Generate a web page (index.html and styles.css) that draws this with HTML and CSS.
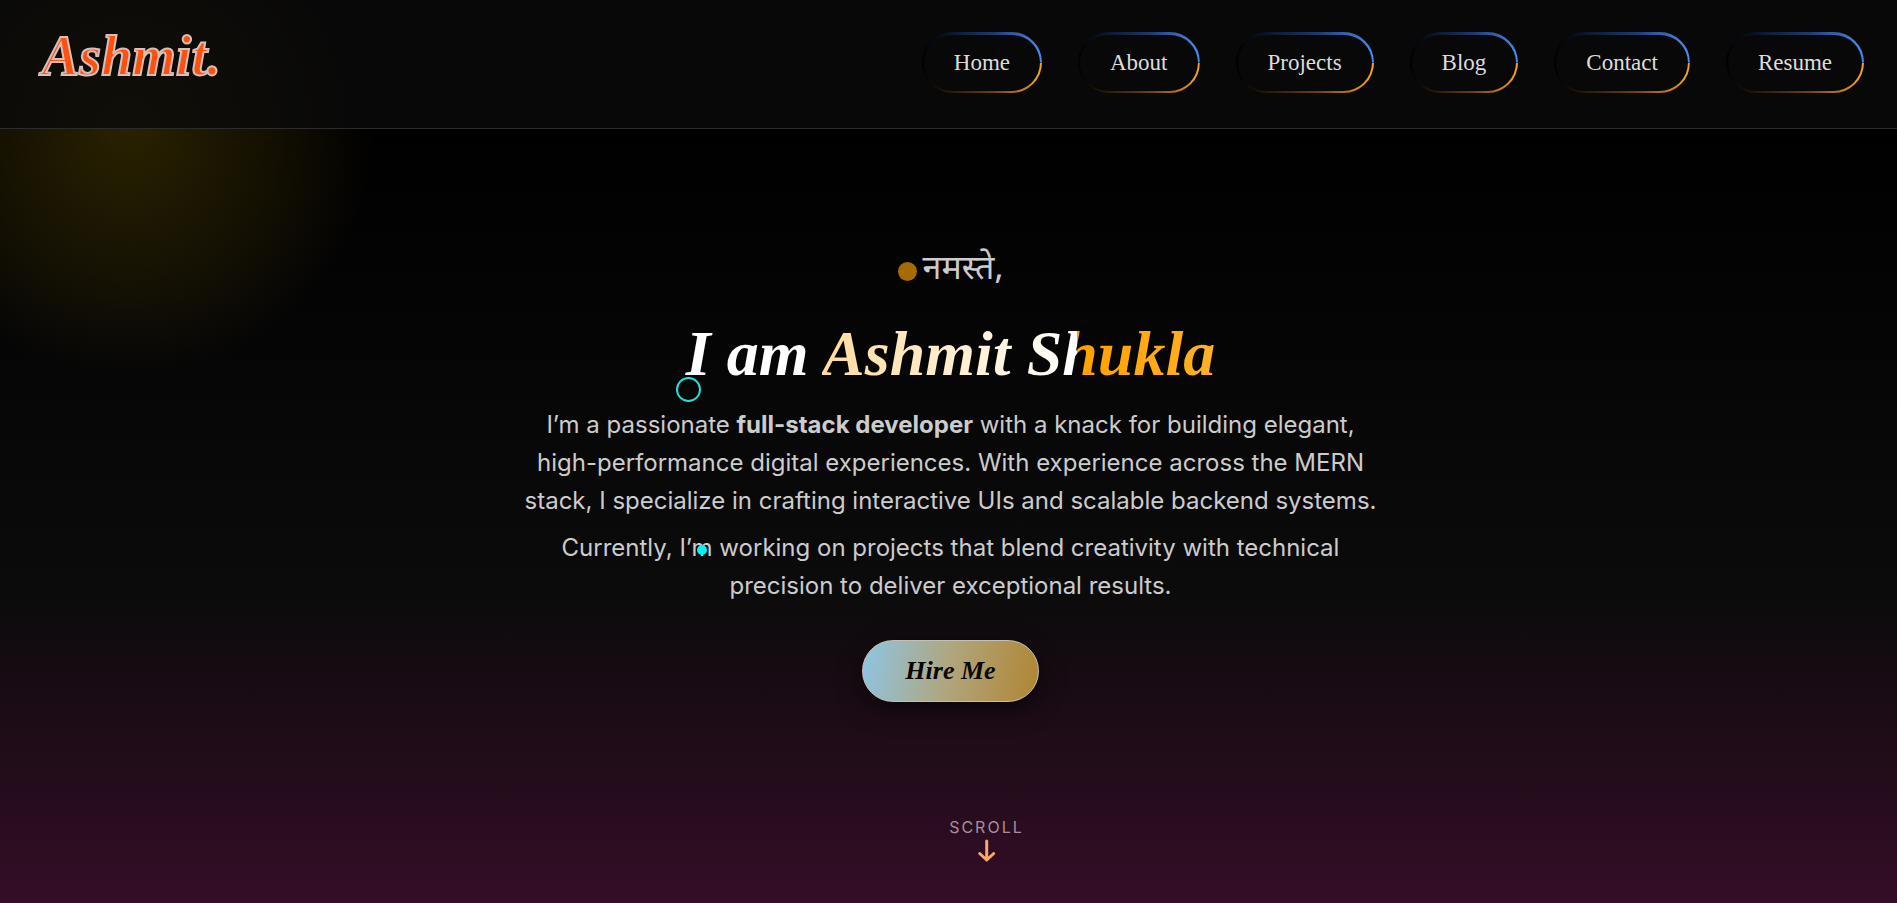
FILE: index.html
```html
<!DOCTYPE html>
<html lang="en">
<head>
<meta charset="utf-8">
<meta name="viewport" content="width=device-width, initial-scale=1">
<title>Ashmit Shukla</title>
<link rel="stylesheet" href="styles.css">
</head>
<body>
<div class="glow" aria-hidden="true"></div>
<header class="site-header">
  <a class="logo" href="#home">Ashmit.</a>
  <nav class="nav" aria-label="Main">
    <a class="nav-link" href="#home">Home</a>
    <a class="nav-link" href="#about">About</a>
    <a class="nav-link" href="#projects">Projects</a>
    <a class="nav-link" href="#blog">Blog</a>
    <a class="nav-link" href="#contact">Contact</a>
    <a class="nav-link" href="#resume">Resume</a>
  </nav>
</header>
<main class="hero" id="home">
  <p class="greeting"><span class="greeting-dot"></span><span lang="hi">नमस्ते,</span></p>
  <h1 class="title">I am <span class="name">Ashmit Shukla</span></h1>
  <div class="intro">
    <p>I’m a passionate <strong>full-stack developer</strong> with a knack for building elegant, high-performance digital experiences. With experience across the MERN stack, I specialize in crafting interactive UIs and scalable backend systems.</p>
    <p>Currently, I’m working on projects that blend creativity with technical precision to deliver exceptional results.</p>
  </div>
  <button class="hire" type="button">Hire Me</button>
</main>
<a class="scroll" href="#about">
  <span class="scroll-label">SCROLL</span>
  <svg class="scroll-arrow" viewBox="0 0 18 24" aria-hidden="true"><path d="M9 2v19M2 14.500l7 6.500 7-6.500"/></svg>
</a>
<div class="cursor-ring" aria-hidden="true"></div>
<div class="cursor-dot" aria-hidden="true"></div>
</body>
</html>
```
FILE: styles.css
```css
* { box-sizing: border-box; }

body {
  margin: 0;
  min-height: 100vh;
  position: relative;
  overflow-x: hidden;
  display: flex;
  flex-direction: column;
  background: linear-gradient(#000 0%, #000 14%, #0b0b0b 65%, #340d26 100%);
  color: #ccc;
  font-family: "Inter", "Noto Sans", sans-serif;
}

p, h1 { margin: 0; }
a { text-decoration: none; color: inherit; }

.glow {
  position: absolute;
  left: -122px;
  top: -122px;
  width: 500px;
  height: 500px;
  border-radius: 50%;
  background: radial-gradient(circle, rgba(255, 210, 0, 0.16), rgba(255, 200, 0, 0.08) 40%, rgba(255, 200, 0, 0) 70%);
}

.site-header {
  position: relative;
  display: flex;
  align-items: flex-start;
  justify-content: space-between;
  height: 129px;
  padding: 32px 33px 0 42px;
  border-bottom: 1px solid #2c2c2c;
  background: rgba(10, 10, 10, 0.8);
}

.logo {
  font-family: "Liberation Serif", serif;
  font-style: italic;
  font-weight: 700;
  font-size: 56px;
  line-height: 48px;
  color: #ff5010;
  -webkit-text-stroke: 2px #d6bfb8;
}

.nav { display: flex; gap: 36px; }

.nav-link {
  padding: 16px 30px;
  border-radius: 31px;
  border: 2px solid transparent;
  border-top-width: 3px;
  font-family: "Liberation Serif", serif;
  font-size: 23px;
  line-height: 24px;
  color: #ddd;
  background:
    linear-gradient(#080808, #080808) padding-box,
    linear-gradient(90deg, #000, #1d3a70 60%, #4d8cf5) top / 100% 50% no-repeat border-box,
    linear-gradient(90deg, #000, #6b4310 60%, #ffa51f) bottom / 100% 50% no-repeat border-box;
}

.hero {
  position: relative;
  display: flex;
  flex-direction: column;
  align-items: center;
  padding: 114px 24px 0 28px;
}

.greeting {
  display: flex;
  align-items: center;
  gap: 6px;
  font-family: "Noto Sans Devanagari", "Noto Sans", sans-serif;
  font-size: 34px;
  line-height: 56px;
}

.greeting-dot {
  width: 19px;
  height: 19px;
  border-radius: 50%;
  background: #a56c04;
}

.title {
  margin-top: 15px;
  font-family: "Liberation Serif", serif;
  font-style: italic;
  font-weight: 700;
  font-size: 64px;
  line-height: 80px;
  color: #fff;
}

.name {
  background: linear-gradient(90deg, #ffdc9c, #fff 65%, #ffa100 65%, #ffb128);
  -webkit-background-clip: text;
  background-clip: text;
  color: transparent;
}

.intro {
  display: flex;
  flex-direction: column;
  gap: 9px;
  max-width: 868px;
  margin-top: 12px;
  text-align: center;
  font-size: 24px;
  line-height: 38px;
}

.hire {
  margin-top: 35px;
  padding: 15px 42px;
  border: 1px solid #c4c0b4;
  border-radius: 31px;
  background: linear-gradient(100deg, #8fc5e4, #b0a57c 50%, #b08532);
  box-shadow: 0 8px 24px rgba(0, 0, 0, 0.5);
  font-family: "Liberation Serif", serif;
  font-style: italic;
  font-weight: 700;
  font-size: 26px;
  line-height: 30px;
  color: #0a0704;
}

.scroll {
  position: absolute;
  left: 52%;
  bottom: 40px;
  transform: translateX(-50%);
  display: flex;
  flex-direction: column;
  align-items: center;
  gap: 2px;
}

.scroll-label {
  font-size: 16px;
  line-height: 20px;
  letter-spacing: 2px;
  color: #a78d9e;
}

.scroll-arrow {
  width: 18px;
  height: 24px;
  fill: none;
  stroke: #f9a870;
  stroke-width: 3;
  stroke-linecap: round;
  stroke-linejoin: round;
}

.cursor-ring {
  position: absolute;
  left: 676px;
  top: 377px;
  width: 25px;
  height: 25px;
  border: 2px solid #1fe0d4;
  border-radius: 50%;
}

.cursor-dot {
  position: absolute;
  left: 697px;
  top: 545px;
  width: 10px;
  height: 10px;
  border-radius: 50%;
  background: #00f5f0;
}
```
